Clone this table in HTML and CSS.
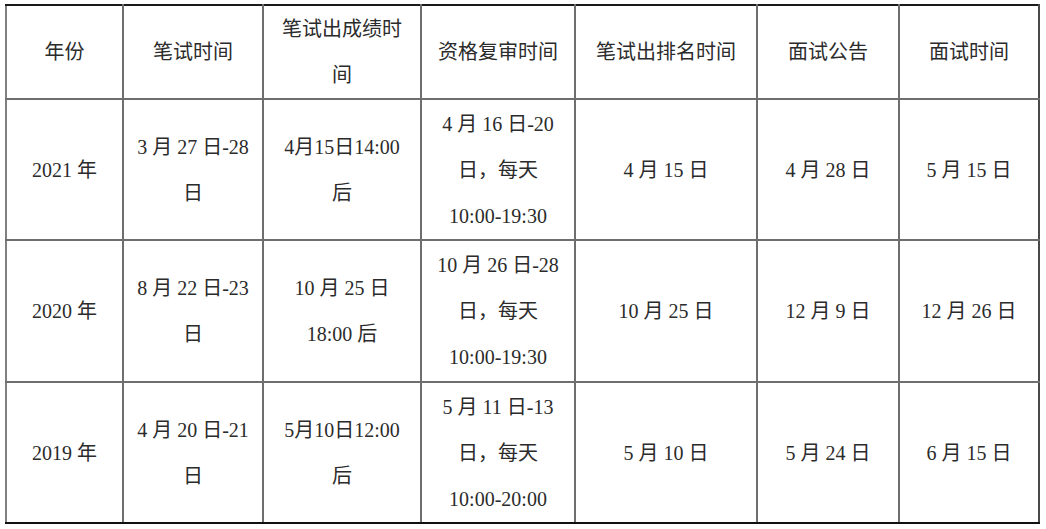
FILE: index.html
```html
<!DOCTYPE html>
<html lang="zh-CN">
<head>
<meta charset="utf-8">
<title>考试时间表</title>
<link rel="stylesheet" href="styles.css">
</head>
<body>
<table class="schedule">
  <colgroup>
    <col class="c1"><col class="c2"><col class="c3"><col class="c4"><col class="c5"><col class="c6"><col class="c7">
  </colgroup>
  <thead>
    <tr class="head">
      <th>年份</th>
      <th>笔试时间</th>
      <th>笔试出成绩时<br>间</th>
      <th>资格复审时间</th>
      <th>笔试出排名时间</th>
      <th>面试公告</th>
      <th>面试时间</th>
    </tr>
  </thead>
  <tbody>
    <tr class="row r1">
      <td>2021 年</td>
      <td>3 月 27 日-28<br>日</td>
      <td>4月15日14:00<br>后</td>
      <td>4 月 16 日-20<br>日，每天<br>10:00-19:30</td>
      <td>4 月 15 日</td>
      <td>4 月 28 日</td>
      <td>5 月 15 日</td>
    </tr>
    <tr class="row r2">
      <td>2020 年</td>
      <td>8 月 22 日-23<br>日</td>
      <td>10 月 25 日<br>18:00 后</td>
      <td>10 月 26 日-28<br>日，每天<br>10:00-19:30</td>
      <td>10 月 25 日</td>
      <td>12 月 9 日</td>
      <td>12 月 26 日</td>
    </tr>
    <tr class="row r3 last">
      <td>2019 年</td>
      <td>4 月 20 日-21<br>日</td>
      <td>5月10日12:00<br>后</td>
      <td>5 月 11 日-13<br>日，每天<br>10:00-20:00</td>
      <td>5 月 10 日</td>
      <td>5 月 24 日</td>
      <td>6 月 15 日</td>
    </tr>
  </tbody>
</table>
</body>
</html>
```
FILE: styles.css
```css
html, body {
  margin: 0;
  padding: 0;
  background: #ffffff;
}

body {
  font-family: "Liberation Serif", "Noto Sans CJK SC", serif;
  font-size: 20px;
  color: #2b2b2b;
}

.schedule {
  border-collapse: collapse;
  table-layout: fixed;
  margin: 4px 0 0 5px;
  width: 1033px;
}

.c1 { width: 117px; }
.c2 { width: 140px; }
.c3 { width: 158px; }
.c4 { width: 154px; }
.c5 { width: 182px; }
.c6 { width: 142px; }
.c7 { width: 140px; }

.schedule th,
.schedule td {
  border: 2px solid #6e6e6e;
  padding: 0;
  text-align: center;
  vertical-align: middle;
  white-space: nowrap;
  line-height: 46px;
  font-weight: normal;
}

.head th {
  border-top: 2px solid #1a1a1a;
  height: 92px;
}

.row td {
  height: 139px;
}

.r2 td {
  height: 140px;
}

.last td {
  border-bottom: 2px solid #111111;
}

.schedule tr th:first-child,
.schedule tr td:first-child {
  border-left-color: #808080;
}

.schedule tr th:last-child,
.schedule tr td:last-child {
  border-right-color: #4a4a4a;
}
```
